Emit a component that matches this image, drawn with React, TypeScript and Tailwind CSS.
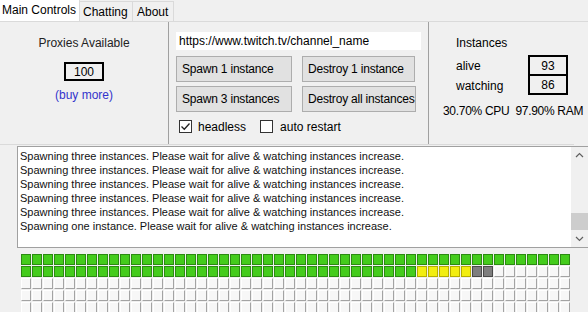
import React from "react";

// 인스턴스 상태 셀
type Cell = "alive" | "watching" | "spawning" | "dead" | "empty";

const cells: Cell[] = Array.from({ length: 250 }, (_, i) => {
  if (i < 86) return "alive";
  if (i < 91) return "spawning";
  if (i < 93) return "dead";
  return "empty";
});

const cellClass: Record<Cell, string> = {
  alive: "bg-[#44cc1c] border border-[#2c8a12]",
  watching: "bg-[#44cc1c] border border-[#2c8a12]",
  spawning: "bg-[#f2ee10] border border-[#b5ad00]",
  dead: "bg-[#7e7e7e] border border-[#4a4a4a]",
  empty:
    "bg-[#f7f7f7] border-t border-l border-t-white border-l-white border-r border-b border-r-[#a3a3a3] border-b-[#a3a3a3]",
};

const logLines = [
  "Spawning three instances. Please wait for alive & watching instances increase.",
  "Spawning three instances. Please wait for alive & watching instances increase.",
  "Spawning three instances. Please wait for alive & watching instances increase.",
  "Spawning three instances. Please wait for alive & watching instances increase.",
  "Spawning three instances. Please wait for alive & watching instances increase.",
  "Spawning one instance. Please wait for alive & watching instances increase.",
];

const WinButton = ({ label, w }: { label: string; w: string }) => (
  <button
    className={`${w} h-[26px] shrink-0 text-left pl-[5px] bg-[#e1e1e1] border border-[#adadad] text-[12px] tracking-[-0.2px] text-black leading-none whitespace-nowrap`}
  >
    {label}
  </button>
);

const CheckBox = ({ checked }: { checked: boolean }) => (
  <span className="w-[13px] h-[13px] border border-[#333] bg-white flex items-center justify-center">
    {checked && (
      <svg width="11" height="11" viewBox="0 0 11 11">
        <path d="M1.5 5.5 L4.3 8.3 L9.5 2.5" fill="none" stroke="#222" strokeWidth="1.3" />
      </svg>
    )}
  </span>
);

export default function App() {
  return (
    <div
      className="w-[588px] h-[312px] overflow-hidden bg-[#f0f0f0] text-black text-[12px] whitespace-nowrap"
      style={{ fontFamily: '"Liberation Sans", Arial, sans-serif' }}
    >
      {/* 탭 */}
      <div className="h-[22px] flex items-end border-b border-[#dadada]">
        <div className="h-[22px] w-[80px] shrink-0 bg-white border-r border-[#dadada] pl-[2px] pb-[1px] flex items-center">
          Main Controls
        </div>
        <div className="h-[20px] w-[53px] shrink-0 border-t border-r border-[#dadada] bg-[#f0f0f0] pl-[3px] flex items-center">
          Chatting
        </div>
        <div className="h-[20px] w-[41px] shrink-0 border-t border-r border-[#dadada] bg-[#f0f0f0] pl-[4px] flex items-center">
          About
        </div>
      </div>

      {/* 컨트롤 패널 */}
      <div className="flex h-[123px] border-b border-[#dadada] w-[574px]">
        <div className="w-[169px] shrink-0 border-r border-[#a0a0a0] flex flex-col items-center pt-[13px]">
          <div className="leading-[17px] text-[#222]">Proxies Available</div>
          <div className="mt-[10px] w-[40px] h-[19px] border-2 border-black flex items-center justify-center leading-none">
            100
          </div>
          <div className="mt-[6px] text-[#3333cc] leading-[17px]">(buy more)</div>
        </div>

        <div className="w-[260px] shrink-0 border-r border-[#a0a0a0] pl-[7px] pt-[10px] flex flex-col">
          <div className="w-[245px] h-[18px] bg-white flex items-center pl-[3px] leading-none">
            https://www.twitch.tv/channel_name
          </div>
          <div className="mt-[6px] flex gap-[10px]">
            <WinButton label="Spawn 1 instance" w="w-[116px]" />
            <WinButton label="Destroy 1 instance" w="w-[113px]" />
          </div>
          <div className="mt-[4px] flex gap-[10px]">
            <WinButton label="Spawn 3 instances" w="w-[116px]" />
            <WinButton label="Destroy all instances" w="w-[114px]" />
          </div>
          <div className="mt-[8px] flex items-center pl-[3px]">
            <CheckBox checked />
            <span className="ml-[6px] leading-none">headless</span>
            <span className="ml-[14px]">
              <CheckBox checked={false} />
            </span>
            <span className="ml-[7px] leading-none">auto restart</span>
          </div>
        </div>

        <div className="flex-1 pl-[14px] pt-[13px] flex flex-col">
          <div className="pl-[13px] leading-[17px]">Instances</div>
          <div className="mt-[3px] pl-[13px] flex">
            <div className="w-[72px] flex flex-col">
              <span className="h-[20px] leading-[22px]">alive</span>
              <span className="h-[20px] leading-[22px]">watching</span>
            </div>
            <div className="flex flex-col">
              <div className="w-[40px] h-[21px] border-2 border-black flex items-center justify-center leading-none">
                93
              </div>
              <div className="-mt-[2px] w-[40px] h-[21px] border-2 border-black flex items-center justify-center leading-none">
                86
              </div>
            </div>
          </div>
          <div className="mt-[8px] leading-[17px] tracking-[-0.3px]">30.70% CPU&nbsp; 97.90% RAM</div>
        </div>
      </div>

      {/* 로그 */}
      <div className="mt-[1px] ml-[17px] h-[102px] border border-[#a0a0a0] border-r-0 bg-white flex">
        <div className="flex-1 pt-[2px] pl-[2px] text-[11px] leading-[14px] text-[#111]">
          {logLines.map((l, i) => (
            <div key={i}>{l}</div>
          ))}
        </div>
        <div className="w-[17px] bg-[#f0f0f0] flex flex-col items-center">
          <svg width="17" height="17" viewBox="0 0 17 17">
            <path d="M5 10 L8.5 6.5 L12 10" fill="none" stroke="#606060" strokeWidth="1.2" />
          </svg>
          <div className="mt-[49px] w-[17px] h-[17px] bg-[#cdcdcd]" />
          <div className="flex-1" />
          <svg width="17" height="17" viewBox="0 0 17 17">
            <path d="M5 7 L8.5 10.5 L12 7" fill="none" stroke="#606060" strokeWidth="1.2" />
          </svg>
        </div>
      </div>

      {/* 인스턴스 그리드 */}
      <div className="mt-[6px] ml-[21px] grid grid-cols-[repeat(50,10px)] auto-rows-[11px] gap-[1px]">
        {cells.map((c, i) => (
          <div key={i} className={cellClass[c]} />
        ))}
      </div>
    </div>
  );
}
